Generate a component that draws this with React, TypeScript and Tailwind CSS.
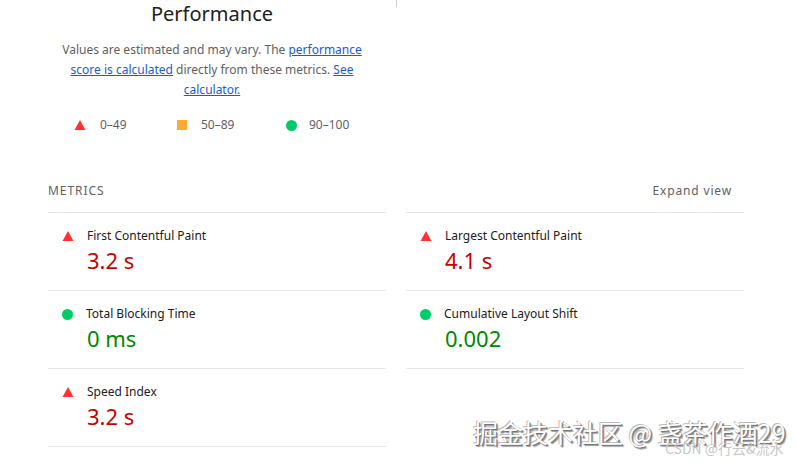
import React from "react";

type Kind = "fail" | "pass" | "avg";

function Icon({ kind }: { kind: Kind }) {
  if (kind === "fail")
    return (
      <svg width="12" height="12" viewBox="0 0 12 12" className="shrink-0">
        <polygon points="6,1 11.5,11 0.5,11" fill="#ff3333" />
      </svg>
    );
  if (kind === "avg")
    return <span className="inline-block w-[10px] h-[10px] bg-[#ffaa33] shrink-0" />;
  return <span className="inline-block w-[11px] h-[11px] rounded-full bg-[#00cc66] shrink-0" />;
}

function Metric({ kind, title, value }: { kind: Kind; title: string; value: string }) {
  return (
    <div className="h-[78px] border-b border-[#e6e6e6] pl-[14px] pt-[15px]">
      <div className="flex items-center gap-[13px]">
        <Icon kind={kind} />
        <span className="text-[12px] leading-[16px] text-[#212121]">{title}</span>
      </div>
      <div
        className={
          "pl-[25px] text-[22px] leading-[28px] mt-[2px] " +
          (kind === "fail" ? "text-[#cc0000]" : "text-[#008800]")
        }
      >
        {value}
      </div>
    </div>
  );
}

export default function App() {
  return (
    <div
      className="relative w-[798px] h-[463px] bg-white overflow-hidden"
      style={{ fontFamily: '"Noto Sans", "Open Sans", Arial, sans-serif' }}
    >
      <div className="absolute left-[396px] top-0 w-px h-[7px] bg-[#d0d0d0]" />
      <div className="pl-[48px] w-[744px]">
        <div className="w-[328px] text-center">
          <div className="text-[20px] leading-[28px] text-[#212121]">Performance</div>
          <div className="mt-[12px] text-[12px] leading-[20px] text-[#616161] px-[6px]">
            Values are estimated and may vary. The{" "}
            <a className="text-[#1a5ad6] underline">performance score is calculated</a> directly
            from these metrics.{" "}
            <a className="text-[#1a5ad6] underline">See calculator.</a>
          </div>
          <div className="mt-[17px] flex items-center text-[12px] leading-[16px] text-[#616161]">
            <div className="flex items-center gap-[14px] ml-[26px] w-[103px]">
              <Icon kind="fail" />
              <span>0–49</span>
            </div>
            <div className="flex items-center gap-[14px] w-[109px]">
              <Icon kind="avg" />
              <span>50–89</span>
            </div>
            <div className="flex items-center gap-[12px]">
              <Icon kind="pass" />
              <span>90–100</span>
            </div>
          </div>
        </div>
        <div className="mt-[50px] flex items-center justify-between h-[16px] text-[12px] text-[#616161]">
          <span className="tracking-[0.08em]">METRICS</span>
          <span className="pr-[12px] tracking-[0.07em]">Expand view</span>
        </div>
        <div className="mt-[13px] grid grid-cols-2 gap-x-[20px]">
          <div className="border-t border-[#e6e6e6]">
            <Metric kind="fail" title="First Contentful Paint" value="3.2 s" />
            <Metric kind="pass" title="Total Blocking Time" value="0 ms" />
            <Metric kind="fail" title="Speed Index" value="3.2 s" />
          </div>
          <div className="border-t border-[#e6e6e6]">
            <Metric kind="fail" title="Largest Contentful Paint" value="4.1 s" />
            <Metric kind="pass" title="Cumulative Layout Shift" value="0.002" />
          </div>
        </div>
      </div>
      <div
        className="absolute left-[473px] top-[416px] text-[25px] leading-[32px] text-white whitespace-nowrap"
        style={{
          fontFamily: '"Noto Sans CJK SC", "Noto Sans", sans-serif',
          textShadow: "1px 1px 0 #777, 2px 2px 1px #999, -1px -1px 0 #bbb",
        }}
      >
        掘金技术社区 @ 盏茶作酒29
      </div>
      <div
        className="absolute left-[665px] top-[440px] text-[14px] leading-[16px] text-[#c8c8c8] whitespace-nowrap"
        style={{ fontFamily: '"Noto Sans CJK SC", "Noto Sans", sans-serif' }}
      >
        CSDN @行云&流水
      </div>
    </div>
  );
}
